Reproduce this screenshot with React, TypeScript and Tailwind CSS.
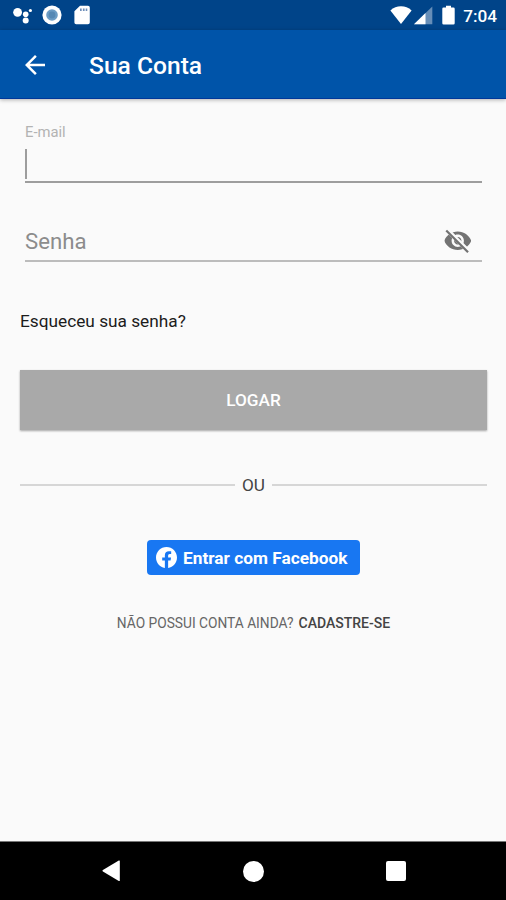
import React, { useState } from 'react'

function StatusBar() {
  return (
    <div className="flex h-[30px] items-center justify-between bg-[#004489] pl-[13px] pr-[9px] text-white">
      <div className="flex items-center">
        <svg width="20" height="18" viewBox="0 0 20 18" fill="currentColor">
          <circle cx="4.6" cy="6.3" r="4.4" />
          <circle cx="12.7" cy="8.2" r="2.8" />
          <circle cx="12.7" cy="14.6" r="3" />
          <circle cx="17.4" cy="4.5" r="1.6" />
        </svg>
        <svg className="ml-[9px]" width="20" height="20" viewBox="0 0 20 20">
          <circle cx="10" cy="10" r="9.6" fill="#fff" />
          <circle cx="10" cy="10" r="5.8" fill="#6c9cc4" />
          <circle cx="10" cy="10" r="3.4" fill="#5588b4" />
        </svg>
        <svg className="ml-[12px]" width="16" height="20" viewBox="0 0 16 20">
          <path d="M6 .8h8a1.8 1.8 0 0 1 1.8 1.8v14.8A1.8 1.8 0 0 1 14 19.200H2.200a1.800 1.800 0 0 1-1.800-1.800V6.300z" fill="#fff" />
          <path d="M6 3.500h1.700v2.600H6zM8.900 3.500h1.700v2.600H8.900zM11.700 3.500h1.600v2.600h-1.600z" fill="#6f8fba" />
        </svg>
      </div>
      <div className="flex items-center">
        <svg width="22" height="20" viewBox="0 0 22 20" fill="currentColor">
          <path d="M11 19 .4 5.500C3.500 2.600 7 1.300 11 1.300s7.500 1.300 10.600 4.200z" />
        </svg>
        <svg className="ml-[2px]" width="19" height="20" viewBox="0 0 19 20" fill="currentColor">
          <path d="M0 19.300 18.300 1.500v17.800z" opacity=".4" />
          <path d="M0 19.300 11.500 8.100v11.200z" />
        </svg>
        <svg className="ml-[9px]" width="13" height="20" viewBox="0 0 13 20" fill="currentColor">
          <path d="M4 .8h5V2.500h2.400A1.300 1.300 0 0 1 12.700 3.800V18.200a1.300 1.300 0 0 1-1.300 1.300H1.600A1.300 1.300 0 0 1 .3 18.200V3.800a1.300 1.300 0 0 1 1.300-1.300H4z" />
        </svg>
        <span className="ml-[8px] mt-[3px] text-[17.200px] font-medium leading-none">7:04</span>
      </div>
    </div>
  )
}

function AppBar() {
  return (
    <header className="relative flex h-[69px] items-center border-b border-[#00389a] bg-[#0054a9] pl-5 text-white shadow-[0_1px_4px_rgba(0,0,0,0.3)]">
      <button aria-label="Voltar" className="mt-[1px]">
        <svg className="block" width="30" height="30" viewBox="0 0 24 24" fill="currentColor">
          <path d="M20 11H7.830l5.590-5.590L12 4l-8 8 8 8 1.410-1.410L7.830 13H20v-2z" />
        </svg>
      </button>
      <h1 className="ml-[39px] mt-[4px] text-[24.600px] font-medium leading-none">Sua Conta</h1>
    </header>
  )
}

function VisibilityOffIcon() {
  return (
    <svg className="block" width="29.500" height="29.500" viewBox="0 0 24 24">
      <clipPath id="eye-cut">
        <path d="M2 4.270 19.730 22l2.540-2.540L4.540 1.730V1H23v22H1V4.270z" />
      </clipPath>
      <path
        clipPath="url(#eye-cut)"
        fill="#737373"
        d="M12 4.500C7 4.500 2.730 7.610 1 12c1.730 4.390 6 7.500 11 7.500s9.270-3.110 11-7.500c-1.730-4.390-6-7.500-11-7.500zM12 17c-2.760 0-5-2.240-5-5s2.240-5 5-5 5 2.240 5 5-2.240 5-5 5zm0-8c-1.660 0-3 1.340-3 3s1.340 3 3 3 3-1.340 3-3-1.340-3-3-3z"
      />
      <path d="M3.270 4.270 19.740 20.740" fill="none" stroke="#737373" strokeWidth="1.800" strokeLinecap="square" />
    </svg>
  )
}

function NavBar() {
  return (
    <nav className="flex h-[59px] items-center justify-between border-t border-[#777] bg-black pl-[101px] pr-[100px] text-white">
      <svg width="21" height="22" viewBox="0 0 21 22" fill="currentColor">
        <path d="M18.800 1.100v19.300q0 1-1 .5L1.900 11.600q-1-.8 0-1.500L17.800.6q1-.4 1 .5z" />
      </svg>
      <div className="mr-[1px] size-[21px] rounded-full bg-white" />
      <div className="size-[20px] rounded-[2px] bg-white" />
    </nav>
  )
}

export default function App() {
  const [email, setEmail] = useState('')
  const [password, setPassword] = useState('')
  const [visible, setVisible] = useState(false)

  return (
    <div className="flex h-[900px] w-[506px] flex-col overflow-hidden bg-[#fafafa] font-['Roboto',sans-serif]">
      <StatusBar />
      <AppBar />

      <main className="flex flex-1 flex-col pl-[20px] pr-[19px]">
        {/* Email */}
        <div className="mx-[5px] mt-[24px] h-[60px] border-b-2 border-[#9d9d9d]">
          <label htmlFor="email" className="block text-[14.800px] leading-[18px] text-[#b3b3b3]">E-mail</label>
          <div className="mt-[8px] flex h-[30px] items-center">
            <span className="h-full w-[2px] bg-[#9d9d9d]" />
            <input
              id="email"
              value={email}
              onChange={(e) => setEmail(e.target.value)}
              className="h-full flex-1 text-[22px] text-black/80 outline-none"
            />
          </div>
        </div>

        {/* Password */}
        <div className="mx-[5px] mt-[37px] flex h-[42px] items-center border-b-2 border-[#bcbcbc] pr-[10px] pt-[2px]">
          <input
            type={visible ? 'text' : 'password'}
            placeholder="Senha"
            value={password}
            onChange={(e) => setPassword(e.target.value)}
            className="min-w-0 flex-1 text-[22.200px] leading-none text-black/80 outline-none placeholder:text-[#8c8c8c]"
          />
          <button aria-label="Mostrar senha" onClick={() => setVisible(!visible)}>
            <VisibilityOffIcon />
          </button>
        </div>

        <a className="mt-[49px] text-[17.250px] leading-[20px] text-[#1c1c1c]">Esqueceu sua senha?</a>

        <button className="mt-[39px] h-[60px] w-[467px] bg-[#a9a9a9] pt-[1px] text-[17.200px] font-medium text-white shadow-[0_1px_2px_rgba(0,0,0,0.350)]">
          LOGAR
        </button>

        <div className="mt-[44px] flex h-[22px] w-[467px] items-center">
          <div className="h-[2px] flex-1 bg-[#d6d6d6]" />
          <span className="mx-[7px] text-[17.200px] leading-[22px] text-[#444]">OU</span>
          <div className="h-[2px] flex-1 bg-[#d6d6d6]" />
        </div>

        <button className="mt-[44px] flex h-[35px] w-[213px] items-center self-center rounded-[4px] bg-[#1877f2] pl-[9px] text-white">
          <svg width="21" height="21" viewBox="0 0 24 24" fill="currentColor">
            <path d="M24 12.070C24 5.410 18.630 0 12 0S0 5.410 0 12.070C0 18.100 4.390 23.090 10.130 24v-8.440H7.080v-3.490h3.050V9.410c0-3.020 1.790-4.690 4.530-4.690 1.310 0 2.680.24 2.680.24v2.970h-1.510c-1.490 0-1.960.93-1.960 1.890v2.250h3.330l-.53 3.490h-2.800V24C19.610 23.090 24 18.100 24 12.070z" />
          </svg>
          <span className="ml-[6px] mt-[2px] whitespace-nowrap text-[17.300px] font-bold leading-none">Entrar com Facebook</span>
        </button>

        <p className="mt-[39px] flex justify-center whitespace-nowrap text-[13.750px] leading-[18px] text-[#666]">
          NÃO POSSUI CONTA AINDA?
          <a className="ml-[5px] text-[14px] font-medium text-[#444]">CADASTRE-SE</a>
        </p>
      </main>

      <NavBar />
    </div>
  )
}
